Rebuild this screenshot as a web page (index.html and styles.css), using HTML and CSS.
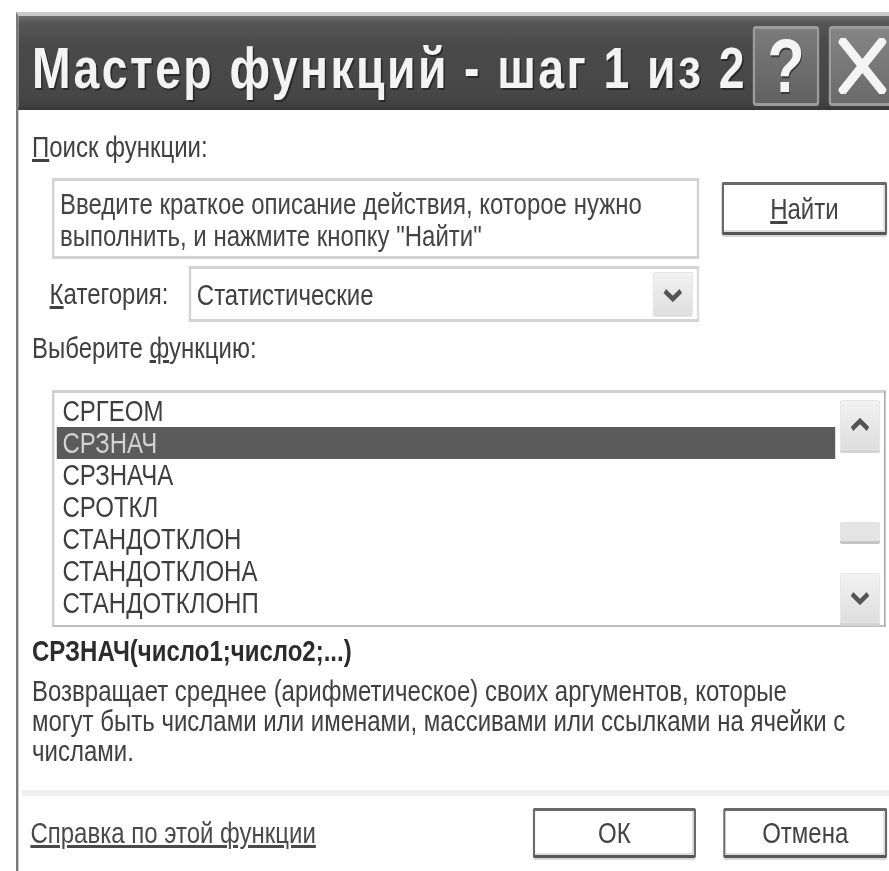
FILE: index.html
```html
<!DOCTYPE html>
<html lang="ru">
<head>
<meta charset="utf-8">
<title>Мастер функций</title>
<link rel="stylesheet" href="styles.css">
</head>
<body>
<div class="stage">
  <div class="dialog">
    <header class="titlebar">
      <h1 class="title">Мастер функций - шаг 1 из 2</h1>
      <div class="caption-buttons">
        <button class="cap-btn help" type="button">?</button>
        <button class="cap-btn close" type="button" aria-label="Закрыть">
          <svg viewBox="0 0 60 56" width="60" height="56"><path d="M6 4 L54 52 M54 4 L6 52" stroke="#f4f4f4" stroke-width="10" stroke-linecap="square" fill="none"/></svg>
        </button>
      </div>
    </header>

    <main class="content">
      <div class="field-label"><u>П</u>оиск функции:</div>
      <div class="search-row">
        <div class="search-box">Введите краткое описание действия, которое нужно<br>выполнить, и нажмите кнопку "Найти"</div>
        <button class="btn find" type="button"><u>Н</u>айти</button>
      </div>

      <div class="category-row">
        <span class="category-label"><u>К</u>атегория:</span>
        <div class="combo">
          <span class="combo-value">Статистические</span>
          <span class="arrow-btn combo-arrow">
            <svg viewBox="0 0 26 14" width="26" height="14"><path d="M3 3 L13 11 L23 3" stroke="#555" stroke-width="5" fill="none"/></svg>
          </span>
        </div>
      </div>

      <div class="field-label pick-label">Выберите <u>ф</u>ункцию:</div>
      <div class="listbox">
        <ul class="items">
          <li>СРГЕОМ</li>
          <li class="selected">СРЗНАЧ</li>
          <li>СРЗНАЧА</li>
          <li>СРОТКЛ</li>
          <li>СТАНДОТКЛОН</li>
          <li>СТАНДОТКЛОНА</li>
          <li>СТАНДОТКЛОНП</li>
        </ul>
        <div class="scrollbar">
          <span class="arrow-btn sb-btn">
            <svg viewBox="0 0 26 14" width="26" height="14"><path d="M3 11 L13 3 L23 11" stroke="#555" stroke-width="5" fill="none"/></svg>
          </span>
          <span class="sb-thumb"></span>
          <span class="arrow-btn sb-btn sb-down">
            <svg viewBox="0 0 26 14" width="26" height="14"><path d="M3 3 L13 11 L23 3" stroke="#555" stroke-width="5" fill="none"/></svg>
          </span>
        </div>
      </div>

      <p class="signature">СРЗНАЧ(число1;число2;...)</p>
      <p class="description">Возвращает среднее (арифметическое) своих аргументов, которые<br>могут быть числами или именами, массивами или ссылками на ячейки с<br>числами.</p>
    </main>

    <footer class="footer">
      <a class="help-link" href="#">Справка по этой функции</a>
      <div class="actions">
        <button class="btn" type="button">ОК</button>
        <button class="btn" type="button">Отмена</button>
      </div>
    </footer>
  </div>
</div>
</body>
</html>
```

FILE: styles.css
```css
html, body {
  margin: 0;
  height: 100%;
  overflow: hidden;
  background: #fff;
}

/* The dialog is drawn on a wide canvas and narrowed horizontally,
   like a screen capture that was resized to a taller aspect. */
.stage {
  width: 1111px;
  height: 871px;
  box-sizing: border-box;
  padding: 12px 0 0 20px;
  transform: scaleX(0.8);
  transform-origin: 0 0;
  font-family: "Liberation Sans", Arial, sans-serif;
  font-size: 30px;
  color: #404040;
}

.dialog {
  width: 1106px;
  height: 859px;
  box-sizing: border-box;
  border-top: 4px solid #c9c9c9;
  border-left: 3px solid #7a7a7a;
  display: flex;
  flex-direction: column;
}

/* ---------- caption ---------- */
.titlebar {
  height: 94px;
  flex: none;
  display: flex;
  align-items: flex-start;
  padding: 0 7px 0 17px;
  background: linear-gradient(#6c6c6c 0, #555 8%, #4a4a4a 30%, #464646 85%, #3d3d3d 100%);
  box-shadow: inset 0 -3px 0 #3a3a3a;
}

.title {
  margin: 0;
  padding-top: 23px;
  font-size: 58px;
  font-weight: bold;
  letter-spacing: 3px;
  line-height: 1;
  color: #f3f3f3;
  white-space: nowrap;
  text-shadow: 2px 2px 0 #2a2a2a;
}

.caption-buttons {
  margin-left: auto;
  display: flex;
  gap: 12px;
  padding-top: 10px;
}

.cap-btn {
  width: 83px;
  height: 80px;
  box-sizing: border-box;
  padding: 0;
  border: 3px solid #9c9c9c;
  border-radius: 4px;
  background: linear-gradient(#7b7b7b, #616161);
  color: #f4f4f4;
  display: flex;
  align-items: center;
  justify-content: center;
  font-family: "Liberation Sans", Arial, sans-serif;
  font-size: 76px;
  font-weight: bold;
  line-height: 1;
  text-shadow: 1px 2px 0 #3a3a3a;
}

.cap-btn.close {
  background: linear-gradient(#858585, #6a6a6a);
}

/* ---------- body ---------- */
.content {
  padding: 21px 0 0 17px;
}

.field-label {
  line-height: 32px;
}

.search-row {
  display: flex;
  align-items: flex-start;
  margin: 15px 0 0 25px;
}

.search-box {
  width: 809px;
  height: 81px;
  box-sizing: border-box;
  border: 3px solid #d3d3d3;
  padding: 7px 7px 3px;
  line-height: 32px;
  color: #444;
}

.btn {
  box-sizing: border-box;
  background: #fff;
  border: 3px solid #6a6a6a;
  border-bottom-color: #565656;
  border-radius: 3px;
  box-shadow: inset -2px -2px 0 #dcdcdc, 0 2px 0 #d6d6d6;
  font-family: "Liberation Sans", Arial, sans-serif;
  font-size: 30px;
  color: #444;
  padding: 0;
}

.find {
  width: 207px;
  height: 53px;
  margin: 4px 0 0 28px;
}

.category-row {
  display: flex;
  align-items: center;
  margin: 7px 0 0 22px;
}

.category-label {
  width: 174px;
}

.combo {
  width: 638px;
  height: 56px;
  box-sizing: border-box;
  border: 3px solid #d3d3d3;
  border-right-color: #dcdcdc;
  padding: 3px 5px 2px 7px;
  display: flex;
  align-items: center;
}

.arrow-btn {
  display: flex;
  align-items: center;
  justify-content: center;
  box-sizing: border-box;
  width: 50px;
  background: linear-gradient(#f2f2f2, #dedede);
  border: 1px solid #e2e2e2;
  border-radius: 2px;
}

.combo-arrow {
  margin-left: auto;
  align-self: stretch;
}

.pick-label {
  margin-top: 10px;
}

.listbox {
  display: flex;
  width: 1042px;
  height: 237px;
  box-sizing: border-box;
  margin: 26px 0 0 25px;
  border-top: 3px solid #d0d0d0;
  border-left: 3px solid #d0d0d0;
  border-right: 2px solid #a8a8a8;
  border-bottom: 2px solid #bdbdbd;
}

.items {
  list-style: none;
  margin: 0;
  padding: 2px 0 0 3px;
  flex: 1;
}

.items li {
  width: 973px;
  height: 32px;
  line-height: 32px;
  box-sizing: border-box;
  padding-left: 7px;
  color: #3e3e3e;
}

.items li.selected {
  background: #5b5b5b;
  color: #d2d2d2;
}

.scrollbar {
  width: 50px;
  margin-right: 5px;
  padding-top: 7px;
  display: flex;
  flex-direction: column;
}

.sb-btn {
  height: 50px;
  box-shadow: 0 3px 0 #d4d4d4;
}

.sb-thumb {
  height: 22px;
  margin-top: 72px;
  box-sizing: border-box;
  background: #e4e4e4;
  border-bottom: 3px solid #c6c6c6;
  border-radius: 2px;
}

.sb-down {
  margin-top: 29px;
}

.signature {
  margin: 8px 0 0;
  font-weight: bold;
  line-height: 32px;
  color: #2c2c2c;
}

.description {
  margin: 9px 0 0;
  line-height: 30px;
  color: #404040;
}

/* ---------- footer ---------- */
.footer {
  margin: 24px 0 0 4px;
  border-top: 6px solid #efefef;
  padding: 12px 17px 0 11px;
  display: flex;
  align-items: center;
}

.help-link {
  color: #4a4a4a;
  text-decoration: underline;
}

.actions {
  margin-left: auto;
  display: flex;
  gap: 34px;
}

.actions .btn {
  width: 204px;
  height: 50px;
}

.actions .btn + .btn {
  width: 205px;
}
```
